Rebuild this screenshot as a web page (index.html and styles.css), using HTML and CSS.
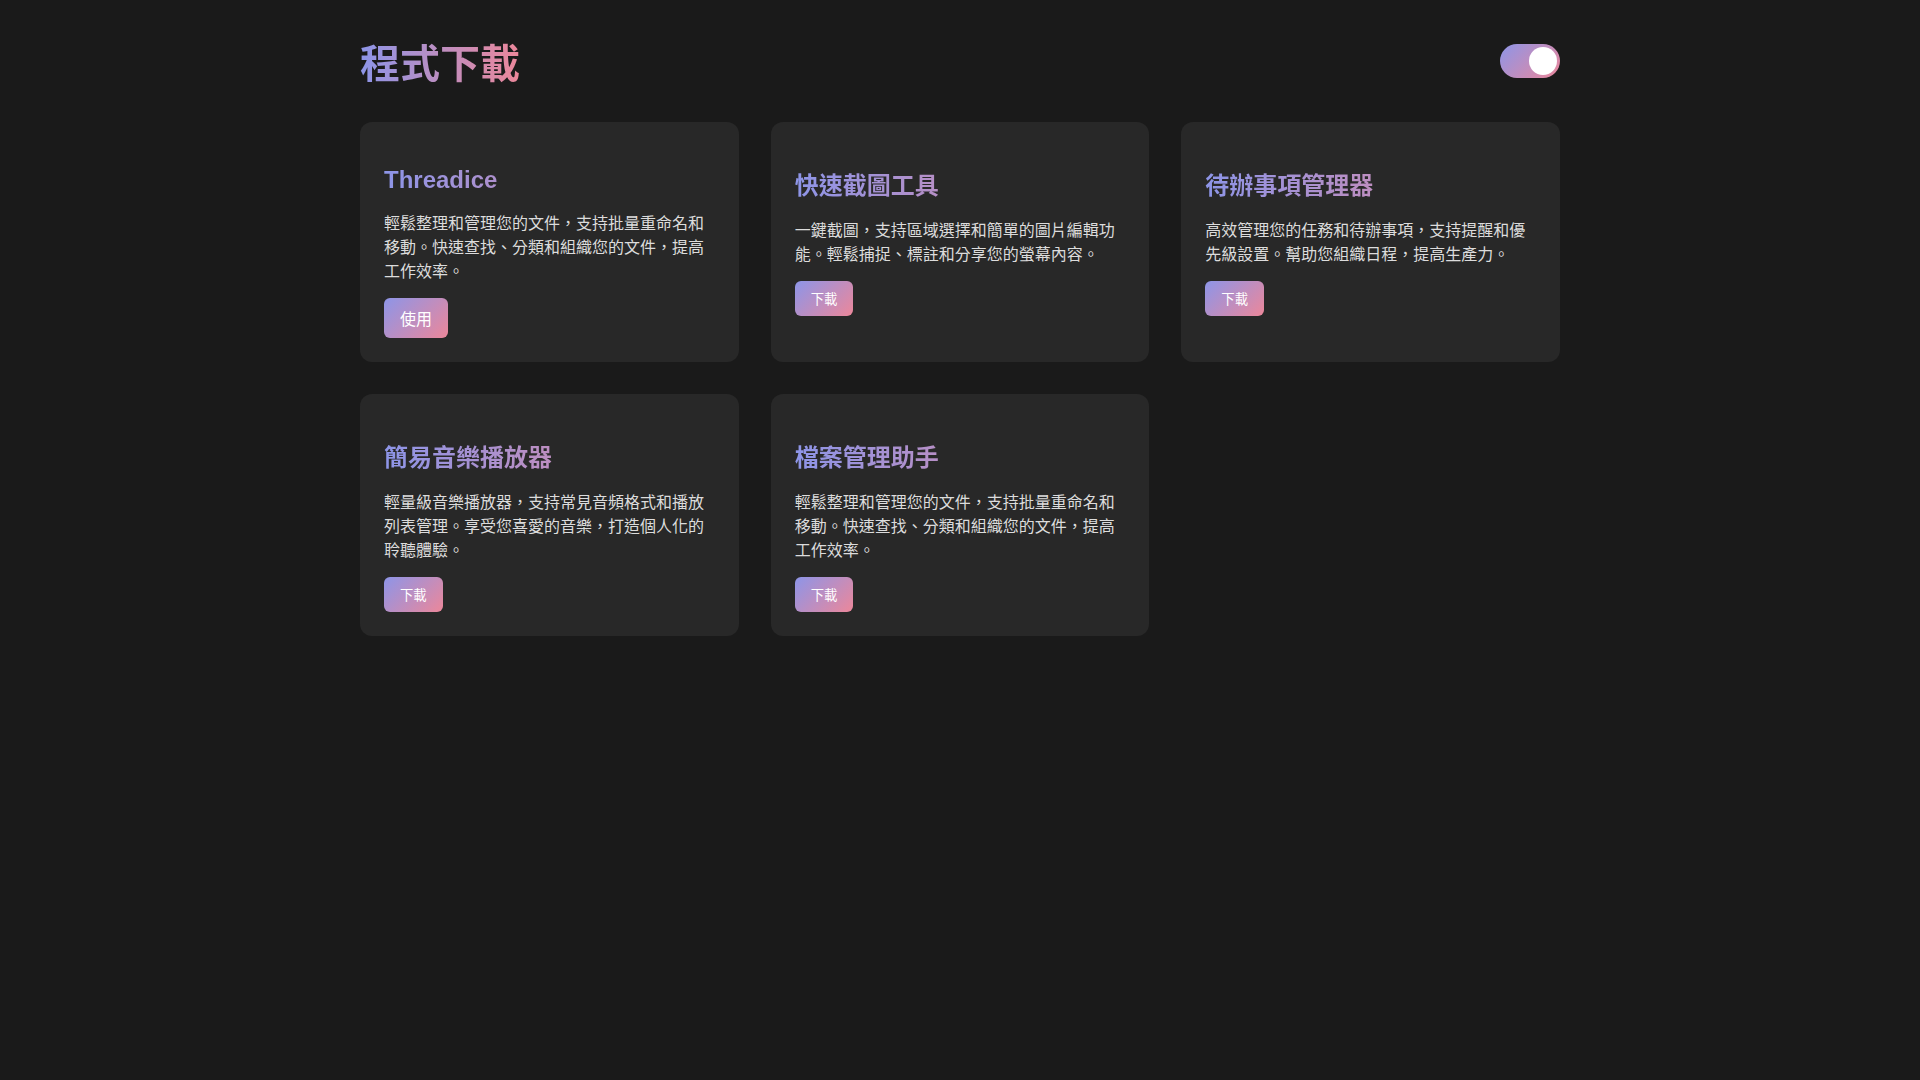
FILE: index.html
```html
<!DOCTYPE html>
<html lang="zh-Hant">
<head>
  <meta charset="utf-8">
  <title>程式下載</title>
  <link rel="stylesheet" href="styles.css">
</head>
<body>
  <div class="container">
    <header class="page-header">
      <h1 class="page-title">程式下載</h1>
      <label class="theme-toggle">
        <input type="checkbox" checked>
        <span class="toggle-track"></span>
      </label>
    </header>

    <main class="app-grid">
      <!-- Threadice -->
      <div class="app-card">
        <h2 class="app-title">Threadice</h2>
        <p class="app-desc">輕鬆整理和管理您的文件，支持批量重命名和移動。快速查找、分類和組織您的文件，提高工作效率。</p>
        <button class="app-btn app-btn-large">使用</button>
      </div>
      <!-- 截圖 -->
      <div class="app-card">
        <h2 class="app-title">快速截圖工具</h2>
        <p class="app-desc">一鍵截圖，支持區域選擇和簡單的圖片編輯功能。輕鬆捕捉、標註和分享您的螢幕內容。</p>
        <button class="app-btn">下載</button>
      </div>
      <!-- 待辦 -->
      <div class="app-card">
        <h2 class="app-title">待辦事項管理器</h2>
        <p class="app-desc">高效管理您的任務和待辦事項，支持提醒和優先級設置。幫助您組織日程，提高生產力。</p>
        <button class="app-btn">下載</button>
      </div>
      <!-- 音樂 -->
      <div class="app-card">
        <h2 class="app-title">簡易音樂播放器</h2>
        <p class="app-desc">輕量級音樂播放器，支持常見音頻格式和播放列表管理。享受您喜愛的音樂，打造個人化的聆聽體驗。</p>
        <button class="app-btn">下載</button>
      </div>
      <!-- 檔案 -->
      <div class="app-card">
        <h2 class="app-title">檔案管理助手</h2>
        <p class="app-desc">輕鬆整理和管理您的文件，支持批量重命名和移動。快速查找、分類和組織您的文件，提高工作效率。</p>
        <button class="app-btn">下載</button>
      </div>
    </main>
  </div>
</body>
</html>
```

FILE: styles.css
```css
/* Page */
body {
  margin: 0;
  padding: 0;
  background-color: #1a1a1a;
  color: #e0e0e0;
  font-family: "Liberation Sans", Arial, "Noto Sans CJK TC", sans-serif;
}

.container {
  max-width: 1200px;
  margin: 0 auto;
  padding: 32px 0;
}

.page-header {
  display: flex;
  justify-content: space-between;
  align-items: center;
  margin-bottom: 32px;
}

.page-title {
  margin: 0;
  font-size: 40px;
  font-weight: bold;
  background: linear-gradient(90deg, #8d95e8, #ec879a);
  -webkit-background-clip: text;
  background-clip: text;
  color: transparent;
}

/* Toggle */
.theme-toggle {
  position: relative;
  display: inline-block;
  width: 60px;
  height: 34px;
}

.theme-toggle input {
  opacity: 0;
  width: 0;
  height: 0;
}

.toggle-track {
  position: absolute;
  inset: 0;
  border-radius: 17px;
  background: linear-gradient(135deg, #8d95e8, #ec879a);
  cursor: pointer;
}

.toggle-track::before {
  content: "";
  position: absolute;
  top: 3px;
  right: 3px;
  width: 28px;
  height: 28px;
  border-radius: 50%;
  background-color: #fff;
}

/* Cards */
.app-grid {
  display: grid;
  grid-template-columns: repeat(3, 1fr);
  gap: 32px;
}

.app-card {
  background-color: #282828;
  border-radius: 12px;
  padding: 24px;
}

.app-title {
  margin: 20px 0 18px;
  font-size: 24px;
  font-weight: bold;
  background: linear-gradient(90deg, #8d95e8, #ec879a);
  -webkit-background-clip: text;
  background-clip: text;
  color: transparent;
}

.app-desc {
  margin: 0 0 14px;
  font-size: 16px;
  line-height: 1.5;
  color: #dcdcdc;
}

.app-btn {
  padding: 8px 16px;
  border: none;
  border-radius: 6px;
  background: linear-gradient(135deg, #8d95e8, #ec879a);
  color: #fff;
  font-family: "Liberation Sans", Arial, "Noto Sans CJK TC", sans-serif;
  font-size: 13.33px;
  cursor: pointer;
}

.app-btn-large {
  font-size: 16px;
}

@media only screen and (max-width: 768px) {
  .app-grid {
    grid-template-columns: repeat(2, 1fr);
  }
}
```
